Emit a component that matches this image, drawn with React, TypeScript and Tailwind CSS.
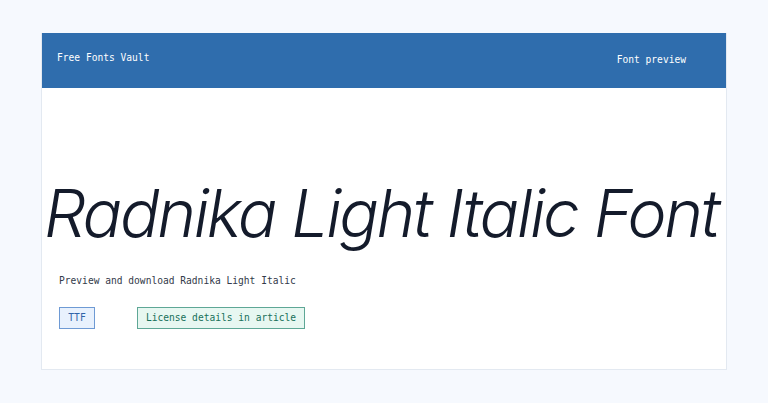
import React from "react";

export default function App() {
  const mono = { fontFamily: '"DejaVu Sans Mono", "Liberation Mono", monospace' };
  return (
    <div className="min-h-[403px] w-full bg-[#f6f9fe] pt-[33px]">
      <div className="mx-auto w-[686px] h-[337px] bg-white border border-[#e3e9f1] border-t-0 flex flex-col">
        <header
          className="h-[55px] bg-[#2f6dad] flex items-center justify-between pl-[15px] pr-[40px] text-white text-[9.6px]"
          style={mono}
        >
          <span className="-mt-[4px]">Free Fonts Vault</span>
          <span>Font preview</span>
        </header>
        <div className="flex flex-col flex-1">
          <h1
            className="mt-[92px] text-center whitespace-nowrap text-[66px] leading-none font-light italic tracking-[-2.4px] text-[#141b2b] -mx-4 pr-[6px]"
            style={{ fontFamily: 'Inter, "Noto Sans", sans-serif' }}
          >
            Radnika Light Italic Font
          </h1>
          <p className="mt-[28px] ml-[17px] text-[9.6px] text-[#333a4a]" style={mono}>
            Preview and download Radnika Light Italic
          </p>
          <div className="mt-[19px] ml-[17px] flex items-center gap-[42px] text-[9.6px]" style={mono}>
            <span className="h-[22px] w-[36px] flex items-center justify-center bg-[#e8f1fd] border border-[#6e9ad4] text-[#2f63a8]">
              TTF
            </span>
            <span className="h-[22px] w-[168px] flex items-center justify-center bg-[#e7f7f1] border border-[#5ea796] text-[#17705a]">
              License details in article
            </span>
          </div>
        </div>
      </div>
    </div>
  );
}
